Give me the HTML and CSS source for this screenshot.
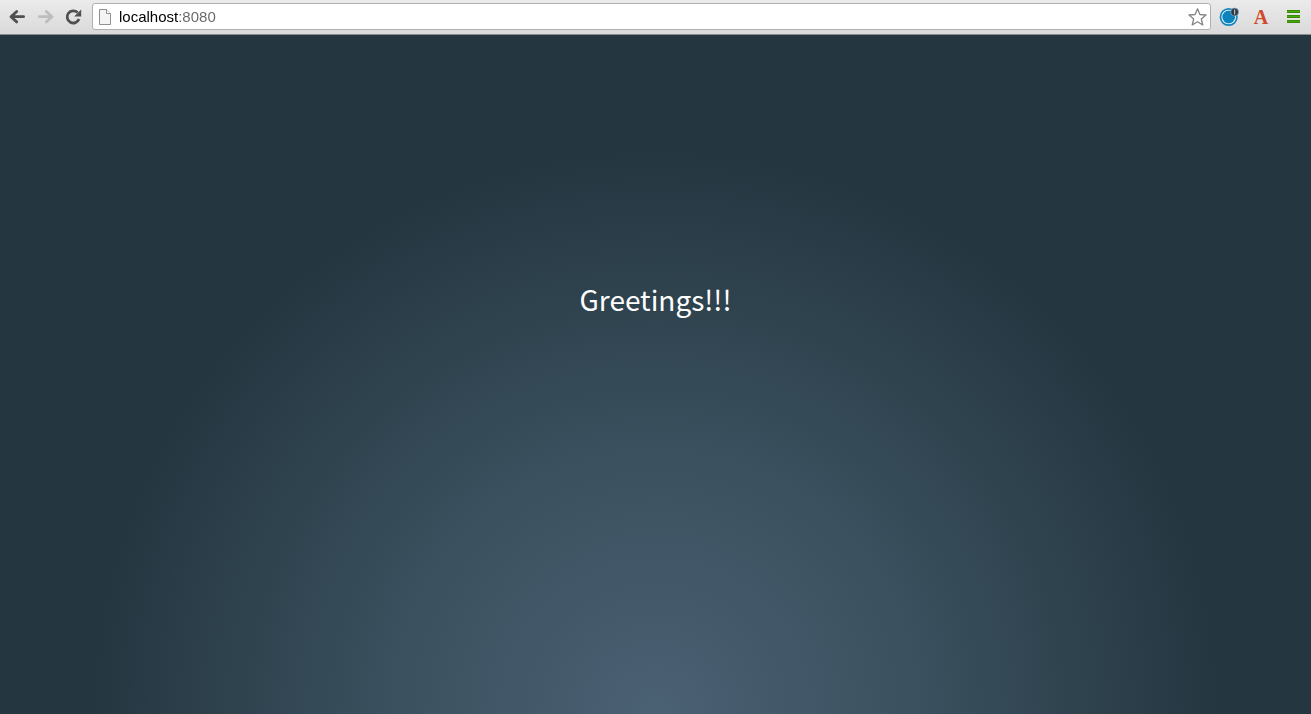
FILE: index.html
```html
<!DOCTYPE html>
<html lang="en">
<head>
<meta charset="utf-8">
<title>Greetings</title>
<link rel="stylesheet" href="styles.css">
</head>
<body>
<header class="toolbar">
  <nav class="nav" aria-label="Navigation">
    <button class="tool" type="button" aria-label="Back">
      <svg width="18" height="18" viewBox="0 0 18 18"><path d="M8.7 3.5 3 8.7l5.7 5.2M4 8.7h11.6" fill="none" stroke="#505050" stroke-width="2.8" stroke-linecap="round" stroke-linejoin="round"/></svg>
    </button>
    <button class="tool" type="button" aria-label="Forward" disabled>
      <svg width="18" height="18" viewBox="0 0 18 18"><path d="M10.3 3.5 16 8.7l-5.7 5.2M15 8.7H3.4" fill="none" stroke="#bdbdbd" stroke-width="2.8" stroke-linecap="round" stroke-linejoin="round"/></svg>
    </button>
    <button class="tool" type="button" aria-label="Reload">
      <svg width="18" height="18" viewBox="0 0 18 18"><path d="M13.6 4.6A6.1 6.1 0 1 0 15 11" fill="none" stroke="#505050" stroke-width="2.8"/><path d="M17.2 1.4v7H10.2z" fill="#505050"/></svg>
    </button>
  </nav>
  <form class="address">
    <svg class="page-icon" width="14" height="16" viewBox="0 0 14 16"><path d="M1.5.5h7l4 4v11h-11z" fill="#f4f4f4" stroke="#909090"/><path d="M8.5.5v4h4" fill="#fff" stroke="#909090"/></svg>
    <input class="url" type="text" aria-label="Address" value="localhost:8080" spellcheck="false">
    <button class="star" type="button" aria-label="Bookmark">
      <svg width="20" height="20" viewBox="0 0 20 20"><path d="m10.5 1.8 2.4 5.7 6.1.5-4.7 4 1.5 6-5.3-3.2L5.2 18l1.5-6L2 8l6.1-.5z" fill="#fff" stroke="#858585" stroke-width="1.3" stroke-linejoin="round"/></svg>
    </button>
  </form>
  <div class="extensions">
    <button class="tool" type="button" aria-label="Sync extension">
      <svg width="20" height="20" viewBox="0 0 20 20"><circle cx="9.7" cy="10" r="8.2" fill="#fff" stroke="#1686bf" stroke-width="1.8"/><circle cx="9.7" cy="10" r="6.4" fill="#0d83bd"/><circle cx="15.6" cy="5" r="4" fill="#303c44" stroke="#80b5d0" stroke-width=".7"/><path d="M15.6 2.5v5" stroke="#b8b8b8" stroke-width="1.2"/></svg>
    </button>
    <button class="tool letter" type="button">A</button>
    <button class="tool" type="button" aria-label="Menu">
      <svg width="14" height="14" viewBox="0 0 14 14"><path d="M1 1.5h13M1 6.5h13M1 11.5h13" stroke="#388a00" stroke-width="3"/><path d="M1 1.5h13M1 6.5h13M1 11.5h13" stroke="#48aa08"/></svg>
    </button>
  </div>
</header>
<main class="page">
  <h1 class="greeting">Greetings!!!</h1>
</main>
</body>
</html>
```
FILE: styles.css
```css
* {
  box-sizing: border-box;
}

body {
  display: flex;
  flex-direction: column;
  min-height: 100vh;
  margin: 0;
  font-family: "Liberation Sans", Arial, sans-serif;
}

button {
  display: flex;
  align-items: center;
  justify-content: center;
  padding: 0;
  border: 0;
  background: none;
}

.toolbar {
  display: flex;
  align-items: center;
  height: 35px;
  padding: 0 8px 1px 7px;
  border-bottom: 1px solid #8b8b8b;
  background: linear-gradient(#ebebeb, #dadada);
}

.nav {
  display: flex;
  gap: 8px;
}

.tool {
  width: 20px;
  height: 20px;
}

.address {
  display: flex;
  flex: 1;
  align-items: center;
  height: 27px;
  margin: 0 8px 0 9px;
  padding: 0 3px 0 5px;
  border: 1px solid #b0b0b0;
  border-radius: 3px;
  background: #fff;
}

.url {
  flex: 1;
  min-width: 0;
  height: 20px;
  margin-left: 7px;
  padding: 0;
  border: 0;
  outline: 0;
  background: linear-gradient(90deg, #000 59px, #666 59px);
  background-clip: text;
  color: transparent;
  caret-color: #000;
  font: 15px/20px "Liberation Sans", Arial, sans-serif;
}

.extensions {
  display: flex;
  gap: 12px;
}

.letter {
  color: #d0482c;
  font: bold 20px/20px "Liberation Serif", serif;
}

.page {
  flex: 1;
  padding-top: 242px;
  background: radial-gradient(circle at 50% 100%, #4b6174, #3b515f 27%, #243640 60%);
}

.greeting {
  margin: 0;
  color: #fff;
  font: 400 28px/44px "Noto Sans CJK SC", "Noto Sans", sans-serif;
  text-align: center;
}
```
